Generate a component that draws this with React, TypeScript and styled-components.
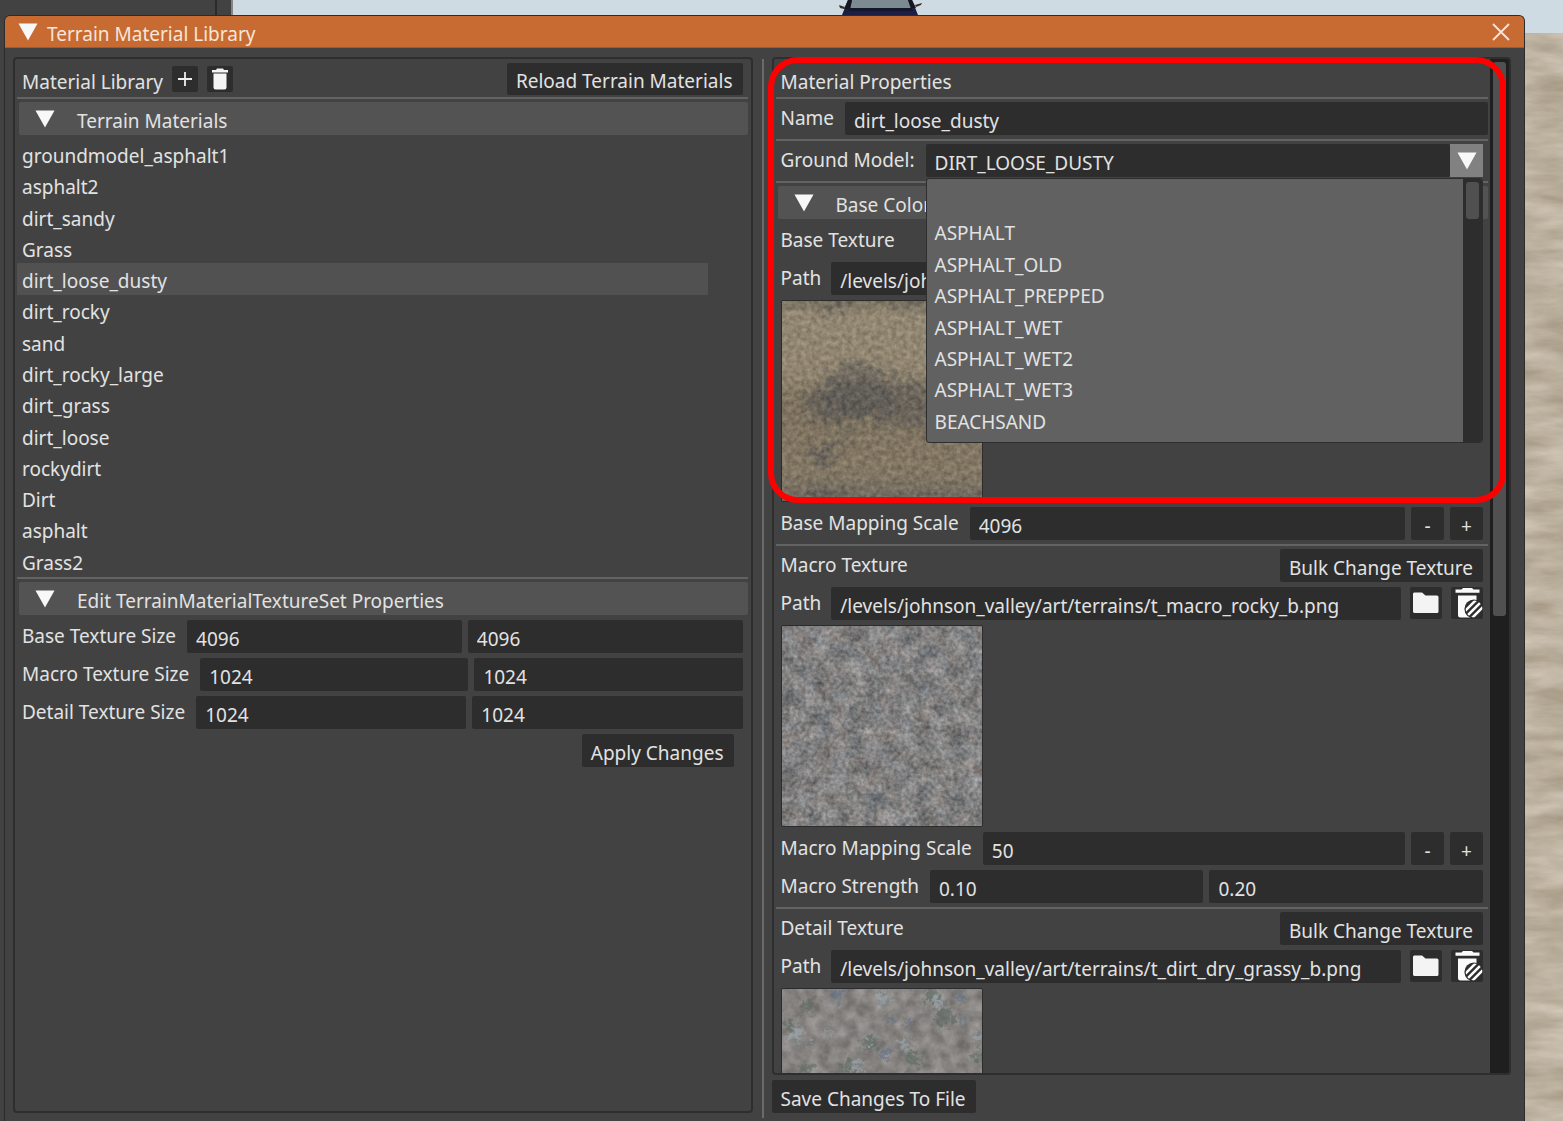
import React, { useState } from "react";
import styled, { createGlobalStyle } from "styled-components";

const font = '"Noto Sans", "Open Sans", sans-serif';

const c = {
  bg: "#424242",
  field: "#2d2d2d",
  header: "#535353",
  line: "#636363",
  edge: "#2e2e2e",
  text: "#e2e2e2",
  accent: "#c86b32",
  popup: "#616161",
};

const GlobalStyle = createGlobalStyle`
  *, *::before, *::after { box-sizing: border-box; }
  html, body { margin: 0; height: 100%; overflow: hidden; }
  body { font-family: ${font}; font-size: 19px; line-height: 28px; color: ${c.text}; }
  button, input, select { font: inherit; color: inherit; margin: 0; border: 0; border-radius: 2px; outline: none; }
`;

const Desktop = styled.div`
  position: relative;
  height: 100vh;
  overflow: hidden;
  background: #cfdbe2;
`;

const Backdrop = styled.svg`
  position: absolute;
  inset: 0;
  width: 100%;
  height: 100%;
`;

const Truck = styled.svg`
  position: absolute;
  top: 0;
  left: 838px;
`;

const Dock = styled.div`
  position: absolute;
  inset: 0 auto 0 0;
  width: 233px;
  display: grid;
  grid-template-columns: 1fr 14px;
  gap: 2px;
  background: #2b2b2b;
  border-right: 2px solid #858585;
`;

const DockPane = styled.div`
  background: #424242;
`;

const Window = styled.section`
  position: absolute;
  inset: 15px 38px 0 4px;
  display: flex;
  flex-direction: column;
  background: ${c.bg};
  border: 1px solid #2c2c2c;
  border-bottom: 0;
  border-radius: 6px 6px 0 0;
  overflow: hidden;
`;

const TitleBar = styled.header`
  display: flex;
  align-items: center;
  height: 32px;
  padding: 0 14px 0 13px;
  background: ${c.accent};
  border-bottom: 1px solid #6d6963;
`;

const Title = styled.h1`
  flex: 1;
  margin: 0;
  padding: 4px 0 0 9px;
  font-size: 19px;
  font-weight: 400;
  line-height: 28px;
  color: #f6e5da;
`;

const GhostButton = styled.button`
  display: grid;
  place-items: center;
  padding: 0;
  background: none;
`;

const Body = styled.div`
  flex: 1;
  min-height: 0;
  display: flex;
  padding: 9px 13px 0 8px;
`;

const Panel = styled.div`
  position: relative;
  flex: 1;
  min-height: 0;
  min-width: 0;
  display: flex;
  border: 2px solid ${c.edge};
  border-radius: 4px;
  overflow: hidden;
`;

const LeftColumn = styled.div`
  flex: 1 1 0;
  min-width: 0;
  display: flex;
  margin-bottom: 8px;
`;

const RightColumn = styled.div`
  position: relative;
  flex: 1 1 0;
  min-width: 0;
  display: flex;
  flex-direction: column;
  gap: 5px;
  padding-bottom: 8px;
`;

const Splitter = styled.div`
  width: 2px;
  margin: 2px 8px 3px 9px;
  background: #6a6a6a;
`;

const Content = styled.div<{ $inset: number }>`
  flex: 1;
  min-width: 0;
  display: flex;
  flex-direction: column;
  gap: 5px;
  padding: 6px ${(p) => p.$inset}px 0 7px;
`;

const Rule = styled.hr`
  flex: none;
  height: 2px;
  width: calc(100% + 10px);
  margin: -1px -5px -2px;
  border: 0;
  background: ${c.line};
`;

const Row = styled.div<{ $gap?: number; $bleed?: boolean }>`
  flex: none;
  position: relative;
  display: flex;
  align-items: stretch;
  gap: ${(p) => p.$gap ?? 6}px;
  height: 33px;
  margin-right: ${(p) => (p.$bleed ? -5 : 0)}px;
`;

const ToolRow = styled.div`
  flex: none;
  display: flex;
  align-items: center;
  gap: 9px;
  height: 28px;
`;

const Heading = styled.h2`
  margin: 0;
  padding-top: 5px;
  font-size: 19px;
  font-weight: 400;
  line-height: 28px;
`;

const Spacer = styled.span`
  flex: 1;
`;

const Label = styled.label<{ $space?: number }>`
  flex: none;
  line-height: 32px;
  margin-right: ${(p) => p.$space ?? 5}px;
  white-space: nowrap;
`;

const Caption = styled.span`
  flex: 1;
  line-height: 32px;
`;

const Field = styled.input`
  flex: 1 1 0;
  min-width: 0;
  padding: 4px 9px 0;
  background: ${c.field};
`;

const Button = styled.button`
  flex: none;
  padding: 4px 10px 0 9px;
  line-height: 28px;
  background: ${c.field};
  white-space: nowrap;
`;

const StepButton = styled(Button)`
  width: 33px;
  padding: 4px 0 0;
  text-align: center;
`;

const IconButton = styled.button<{ $size: number }>`
  flex: none;
  display: grid;
  place-items: center;
  width: ${(p) => p.$size}px;
  height: ${(p) => p.$size}px;
  padding: 0;
  background: ${c.field};
`;

const SectionHeader = styled.button`
  flex: none;
  display: flex;
  align-items: center;
  gap: 22px;
  height: 33px;
  width: calc(100% + 8px);
  margin: 0 -5px 0 -3px;
  padding: 0 16px;
  text-align: left;
  background: ${c.header};

  span { padding-top: 4px; }
`;

const MaterialList = styled.ul`
  flex: none;
  display: grid;
  grid-auto-rows: minmax(0, 1fr);
  height: 438px;
  margin: -2px 35px -3px -5px;
  padding: 0;
  list-style: none;
`;

const MaterialButton = styled.button<{ $selected: boolean }>`
  display: block;
  width: 100%;
  height: 32px;
  padding: 4px 5px 0;
  line-height: 28px;
  text-align: left;
  border-radius: 0;
  background: ${(p) => (p.$selected ? "#515151" : "transparent")};
`;

const Actions = styled(Row)`
  justify-content: flex-end;
  padding-right: 9px;
`;

const Thumb = styled.svg`
  flex: none;
  width: 202px;
  height: 202px;
  border: 1px solid #2c2c2c;
  border-radius: 2px;
`;

const ComboBox = styled.div`
  flex: 1;
  position: relative;
  display: flex;
`;

const Select = styled.select`
  flex: 1;
  min-width: 0;
  padding: 4px 42px 0 9px;
  appearance: none;
  background: ${c.field};
`;

const ComboArrow = styled.span`
  flex: none;
  display: grid;
  place-items: center;
  width: 33px;
  background: #818181;
`;

const Popup = styled.div`
  position: absolute;
  z-index: 2;
  top: 100%;
  left: 0;
  right: 0;
  display: flex;
  height: 265px;
  margin-top: 1px;
  border: 1px solid ${c.edge};
  border-radius: 3px;
  background: ${c.popup};
  overflow: hidden;
`;

const OptionList = styled.ul`
  flex: 1;
  display: grid;
  grid-auto-rows: minmax(0, 1fr);
  margin: 0;
  padding: 8px 8px 4px;
  list-style: none;
  line-height: 30px;
`;

const Track = styled.div<{ $color: string }>`
  flex: none;
  width: 19px;
  padding: 3px 3px;
  background: ${(p) => p.$color};
`;

const Grip = styled.div<{ $length: number }>`
  height: ${(p) => p.$length}px;
  border-radius: 3px;
  background: #505050;
`;

const Highlight = styled.div`
  position: absolute;
  z-index: 3;
  top: 0;
  left: -4px;
  right: 5px;
  height: 446px;
  border: 6px solid #ff0000;
  border-radius: 30px;
  pointer-events: none;
`;

const SaveButton = styled(Button)`
  align-self: flex-start;
  height: 33px;
`;

const Triangle = () => (
  <svg width="20" height="18" viewBox="0 0 20 18" aria-hidden="true">
    <path d="M0.5 0.5H19.5L10 17.5Z" fill="#f8f8f8" />
  </svg>
);

const CloseIcon = () => (
  <svg width="18" height="18" viewBox="0 0 18 18" aria-hidden="true">
    <path d="M1 1L17 17M17 1L1 17" stroke="#f6e5da" strokeWidth="1.8" fill="none" />
  </svg>
);

const PlusIcon = () => (
  <svg width="16" height="16" viewBox="0 0 16 16" aria-hidden="true">
    <path d="M8 1V15M1 8H15" stroke="#eee" strokeWidth="1.8" fill="none" />
  </svg>
);

const BinIcon = () => (
  <svg width="18" height="22" viewBox="0 0 18 22" aria-hidden="true">
    <path d="M6 0.5H12L13 2H17V4.4H1V2H5Z" fill="#f4f4f4" />
    <path d="M2.5 5.4H15.5V19.5Q15.5 21.5 13.5 21.5H4.5Q2.5 21.5 2.5 19.5Z" fill="#f4f4f4" />
  </svg>
);

const FolderIcon = () => (
  <svg width="32" height="32" viewBox="0 0 32 32" aria-hidden="true">
    <path d="M4 5.5H12L15.5 8.5H27Q28.5 8.5 28.5 10V24.5Q28.5 26 27 26H5Q3 26 3 24.5V6.5Z" fill="#f4f4f4" />
  </svg>
);

const ClearIcon = ({ id }: { id: string }) => (
  <svg width="32" height="32" viewBox="0 0 32 32" aria-hidden="true">
    <clipPath id={id}>
      <circle cx="23" cy="22" r="8.4" />
    </clipPath>
    <path d="M4.5 2.5H10.5L12 1H21L22.5 2.5H28.5V5.8H4.5Z" fill="#fafafa" />
    <path d="M7 8.5H25.5V30.5H9.5Q7 30.5 7 28Z" fill="#fafafa" />
    <circle cx="23" cy="22" r="9.6" fill="#2d2d2d" />
    <g clipPath={`url(#${id})`} stroke="#fafafa" strokeWidth="2.6">
      <path d="M10 28L28 10M12 33L33 12M16 36L36 16" />
    </g>
  </svg>
);

const DirtTexture = () => (
  <Thumb viewBox="0 0 200 200" role="img" aria-label="Base texture">
    <defs>
      <linearGradient id="dirtBase" x1="0" y1="0" x2="0" y2="1">
        <stop offset="0" stopColor="#736a58" />
        <stop offset="0.06" stopColor="#978c74" />
        <stop offset="0.36" stopColor="#968a72" />
        <stop offset="0.5" stopColor="#7c705a" />
        <stop offset="0.85" stopColor="#837761" />
        <stop offset="0.96" stopColor="#726a5e" />
        <stop offset="1" stopColor="#6c6863" />
      </linearGradient>
      <filter id="dirtGrain" x="0" y="0" width="1" height="1" colorInterpolationFilters="sRGB">
        <feTurbulence type="fractalNoise" baseFrequency="0.2" numOctaves="4" seed="5" />
        <feColorMatrix values="0.9 0 0 0 0.06  0.85 0 0 0 0.05  0.75 0 0 0 0.05  0 0 0 0 0.28" />
      </filter>
      <filter id="dirtRough" x="-0.3" y="-0.3" width="1.6" height="1.6" colorInterpolationFilters="sRGB">
        <feGaussianBlur stdDeviation="4" result="soft" />
        <feTurbulence type="fractalNoise" baseFrequency="0.12" numOctaves="4" seed="8" />
        <feDisplacementMap in="soft" scale="34" xChannelSelector="R" yChannelSelector="G" />
      </filter>
    </defs>
    <rect width="200" height="200" fill="url(#dirtBase)" />
    <g filter="url(#dirtRough)" fill="#46474c">
      <path d="M22 102Q20 84 44 80Q56 56 82 60Q104 64 112 78Q140 74 152 86Q170 112 150 126Q110 128 88 116Q50 126 28 118Z" opacity="0.5" />
      <ellipse cx="74" cy="98" rx="38" ry="18" opacity="0.5" />
      <ellipse cx="50" cy="6" rx="18" ry="6" opacity="0.5" />
      <ellipse cx="128" cy="4" rx="14" ry="6" opacity="0.45" />
      <ellipse cx="40" cy="154" rx="11" ry="9" opacity="0.8" />
      <ellipse cx="63" cy="136" rx="7" ry="6" opacity="0.55" />
      <ellipse cx="42" cy="194" rx="24" ry="6" opacity="0.55" />
      <ellipse cx="140" cy="196" rx="60" ry="4" opacity="0.3" />
    </g>
    <rect width="200" height="200" filter="url(#dirtGrain)" />
  </Thumb>
);

const RockTexture = () => (
  <Thumb viewBox="0 0 200 200" role="img" aria-label="Macro texture">
    <filter id="rockGrain" x="0" y="0" width="1" height="1" colorInterpolationFilters="sRGB">
      <feTurbulence type="fractalNoise" baseFrequency="0.06" numOctaves="6" seed="12" />
      <feColorMatrix values="0.45 0.14 0 0 0.21  0.45 0.06 0.04 0 0.23  0.45 0 0.08 0 0.24  0 0 0 0 1" result="broad" />
      <feTurbulence type="fractalNoise" baseFrequency="0.25" numOctaves="3" seed="31" />
      <feColorMatrix values="0.8 0.12 0 0 0.05  0.8 0 0.06 0 0.07  0.8 0 0.1 0 0.05  0 0 0 0 0.4" result="fine" />
      <feMerge>
        <feMergeNode in="broad" />
        <feMergeNode in="fine" />
      </feMerge>
    </filter>
    <rect width="200" height="200" filter="url(#rockGrain)" />
  </Thumb>
);

const GrassTexture = () => (
  <Thumb viewBox="0 0 200 200" role="img" aria-label="Detail texture">
    <defs>
      <filter id="grassGrain" x="0" y="0" width="1" height="1" colorInterpolationFilters="sRGB">
        <feTurbulence type="fractalNoise" baseFrequency="0.08" numOctaves="6" seed="21" />
        <feColorMatrix values="0.28 0 0 0 0.39  0.27 0 0 0 0.38  0.27 0 0 0 0.37  0 0 0 0 1" />
      </filter>
      <filter id="grassSpots" x="-0.1" y="-0.1" width="1.2" height="1.2" colorInterpolationFilters="sRGB">
        <feGaussianBlur stdDeviation="1.5" result="soft" />
        <feTurbulence type="fractalNoise" baseFrequency="0.2" numOctaves="4" seed="3" />
        <feDisplacementMap in="soft" scale="22" xChannelSelector="R" yChannelSelector="G" />
      </filter>
    </defs>
    <rect width="200" height="200" filter="url(#grassGrain)" />
    <g filter="url(#grassSpots)" opacity="0.65">
      <g fill="#5c6a62">
        <circle cx="27" cy="17" r="6" /><circle cx="8" cy="37" r="6" /><circle cx="150" cy="6" r="7" />
        <circle cx="163" cy="28" r="9" /><circle cx="88" cy="54" r="8" /><circle cx="132" cy="70" r="8" />
        <circle cx="196" cy="66" r="6" /><circle cx="66" cy="78" r="7" /><circle cx="24" cy="80" r="6" />
      </g>
      <g fill="#5f7186">
        <circle cx="55" cy="5" r="6" /><circle cx="109" cy="30" r="4" /><circle cx="126" cy="35" r="3" />
        <circle cx="103" cy="65" r="5" /><circle cx="182" cy="31" r="4" /><circle cx="178" cy="9" r="4" />
      </g>
      <g fill="#98aab2">
        <circle cx="101" cy="9" r="6" /><circle cx="156" cy="13" r="6" /><circle cx="14" cy="45" r="7" />
        <circle cx="49" cy="44" r="3" /><circle cx="84" cy="50" r="4" /><circle cx="122" cy="58" r="5" />
        <circle cx="74" cy="77" r="5" /><circle cx="195" cy="48" r="4" /><circle cx="28" cy="54" r="3" />
      </g>
    </g>
  </Thumb>
);

const Sand = () => (
  <Backdrop aria-hidden="true">
    <defs>
      <filter id="sand" x="0" y="0" width="1" height="1" colorInterpolationFilters="sRGB">
        <feTurbulence type="fractalNoise" baseFrequency="0.015 0.06" numOctaves="5" seed="4" />
        <feColorMatrix values="0.25 0 0 0 0.61  0.26 0 0 0 0.56  0.28 0 0 0 0.48  0 0 0 0 1" />
      </filter>
    </defs>
    <rect y="33" width="100%" height="100%" filter="url(#sand)" />
  </Backdrop>
);

const TruckRoof = () => (
  <Truck width="86" height="15" viewBox="0 0 86 15" aria-hidden="true">
    <path d="M10 0H74L80 15H4Z" fill="#1b1f45" />
    <path d="M14 0H70L73 9H12Z" fill="#7b8b91" />
    <path d="M10 0H14L12 9H6ZM70 0H74L78 8H73Z" fill="#15171f" />
    <path d="M12 8H73L75 11H10Z" fill="#14172c" />
    <path d="M1 5L7 7L6 9L2 8ZM84 3L77 5L78 7L83 5Z" fill="#3c2f28" />
  </Truck>
);

const materials = [
  "groundmodel_asphalt1", "asphalt2", "dirt_sandy", "Grass", "dirt_loose_dusty", "dirt_rocky", "sand",
  "dirt_rocky_large", "dirt_grass", "dirt_loose", "rockydirt", "Dirt", "asphalt", "Grass2",
];

const groundModels = [
  "", "ASPHALT", "ASPHALT_OLD", "ASPHALT_PREPPED", "ASPHALT_WET", "ASPHALT_WET2", "ASPHALT_WET3", "BEACHSAND",
];

function PairRow({ id, label, values }: { id: string; label: string; values: [string, string] }) {
  return (
    <Row>
      <Label htmlFor={id}>{label}</Label>
      <Field id={id} defaultValue={values[0]} />
      <Field aria-label={`${label} second value`} defaultValue={values[1]} />
    </Row>
  );
}

function ScaleRow({ id, label, value }: { id: string; label: string; value: string }) {
  return (
    <Row>
      <Label htmlFor={id}>{label}</Label>
      <Field id={id} defaultValue={value} />
      <StepButton aria-label={`Decrease ${label}`}>-</StepButton>
      <StepButton aria-label={`Increase ${label}`}>+</StepButton>
    </Row>
  );
}

function PathRow({ id, value }: { id: string; value: string }) {
  return (
    <Row $gap={9}>
      <Label htmlFor={id} $space={1}>Path</Label>
      <Field id={id} defaultValue={value} />
      <IconButton $size={32} aria-label="Browse"><FolderIcon /></IconButton>
      <IconButton $size={32} aria-label="Clear texture"><ClearIcon id={`${id}-clip`} /></IconButton>
    </Row>
  );
}

function CaptionRow({ children }: { children: string }) {
  return (
    <Row>
      <Caption>{children}</Caption>
      <Button>Bulk Change Texture</Button>
    </Row>
  );
}

export default function App() {
  const [selected, setSelected] = useState("dirt_loose_dusty");

  return (
    <Desktop>
      <GlobalStyle />
      <Sand />
      <Dock>
        <DockPane />
        <DockPane />
      </Dock>
      <TruckRoof />
      <Window>
        <TitleBar>
          <GhostButton aria-label="Collapse window"><Triangle /></GhostButton>
          <Title>Terrain Material Library</Title>
          <GhostButton aria-label="Close"><CloseIcon /></GhostButton>
        </TitleBar>
        <Body>
          <LeftColumn>
            <Panel>
              <Content $inset={8}>
                <ToolRow>
                  <Heading>Material Library</Heading>
                  <IconButton $size={26} aria-label="Add material"><PlusIcon /></IconButton>
                  <IconButton $size={26} aria-label="Delete material"><BinIcon /></IconButton>
                  <Spacer />
                  <Button>Reload Terrain Materials</Button>
                </ToolRow>
                <Rule />
                <SectionHeader aria-expanded="true"><Triangle /><span>Terrain Materials</span></SectionHeader>
                <MaterialList>
                  {materials.map((name) => (
                    <li key={name}>
                      <MaterialButton $selected={name === selected} onClick={() => setSelected(name)}>{name}</MaterialButton>
                    </li>
                  ))}
                </MaterialList>
                <Rule />
                <SectionHeader aria-expanded="true"><Triangle /><span>Edit TerrainMaterialTextureSet Properties</span></SectionHeader>
                <PairRow id="base-size" label="Base Texture Size" values={["4096", "4096"]} />
                <PairRow id="macro-size" label="Macro Texture Size" values={["1024", "1024"]} />
                <PairRow id="detail-size" label="Detail Texture Size" values={["1024", "1024"]} />
                <Actions><Button>Apply Changes</Button></Actions>
              </Content>
            </Panel>
          </LeftColumn>
          <Splitter />
          <RightColumn>
            <Panel>
              <Content $inset={7}>
                <ToolRow><Heading>Material Properties</Heading></ToolRow>
                <Rule />
                <Row $bleed>
                  <Label htmlFor="name">Name</Label>
                  <Field id="name" defaultValue="dirt_loose_dusty" />
                </Row>
                <Rule />
                <Row>
                  <Label htmlFor="ground">Ground Model:</Label>
                  <ComboBox>
                    <Select id="ground" defaultValue="DIRT_LOOSE_DUSTY">
                      <option>DIRT_LOOSE_DUSTY</option>
                    </Select>
                    <ComboArrow><Triangle /></ComboArrow>
                    <Popup>
                      <OptionList role="listbox" aria-label="Ground models">
                        {groundModels.map((name) => (
                          <li key={name} role="option" aria-selected="false">{name}</li>
                        ))}
                      </OptionList>
                      <Track $color="#2d2d2d"><Grip $length={37} /></Track>
                    </Popup>
                  </ComboBox>
                </Row>
                <Rule />
                <SectionHeader aria-expanded="true"><Triangle /><span>Base Color</span></SectionHeader>
                <Row><Caption>Base Texture</Caption></Row>
                <PathRow id="base-path" value="/levels/johnson_valley/art/terrains" />
                <DirtTexture />
                <ScaleRow id="base-scale" label="Base Mapping Scale" value="4096" />
                <Rule />
                <CaptionRow>Macro Texture</CaptionRow>
                <PathRow id="macro-path" value="/levels/johnson_valley/art/terrains/t_macro_rocky_b.png" />
                <RockTexture />
                <ScaleRow id="macro-scale" label="Macro Mapping Scale" value="50" />
                <PairRow id="macro-strength" label="Macro Strength" values={["0.10", "0.20"]} />
                <Rule />
                <CaptionRow>Detail Texture</CaptionRow>
                <PathRow id="detail-path" value="/levels/johnson_valley/art/terrains/t_dirt_dry_grassy_b.png" />
                <GrassTexture />
              </Content>
              <Track $color="#1f1f1f"><Grip $length={554} /></Track>
            </Panel>
            <SaveButton>Save Changes To File</SaveButton>
            <Highlight />
          </RightColumn>
        </Body>
      </Window>
    </Desktop>
  );
}
